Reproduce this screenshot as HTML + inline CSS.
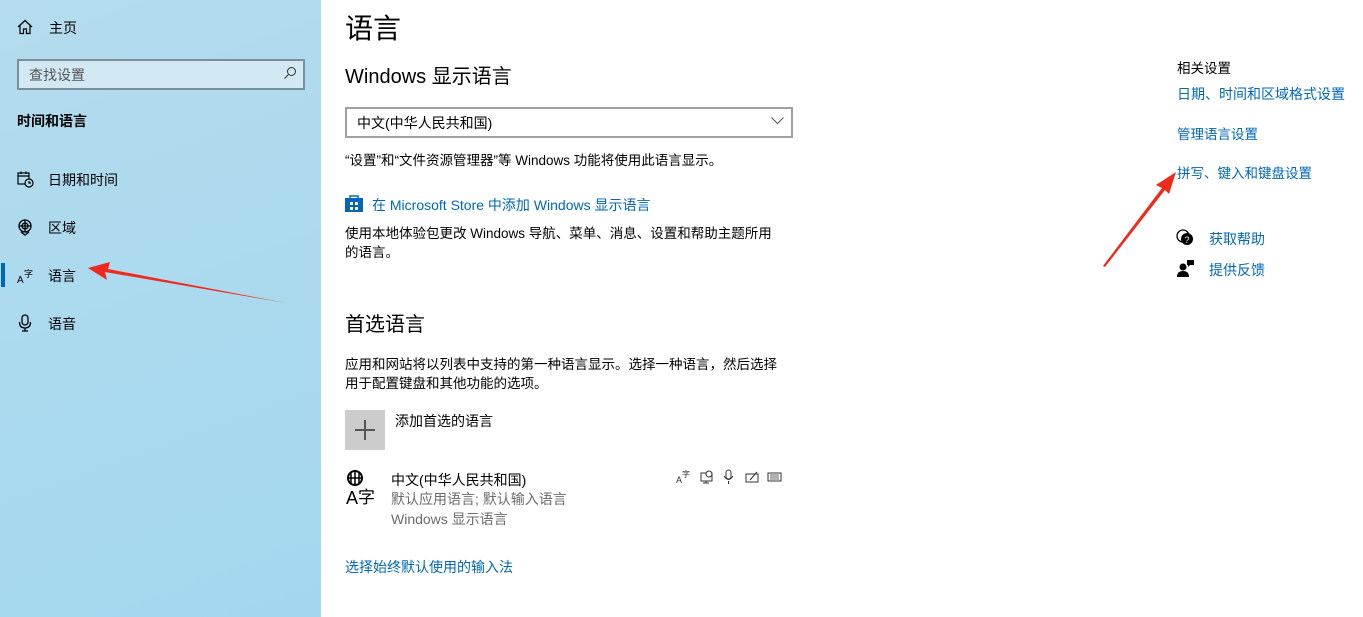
<!DOCTYPE html>
<html><head><meta charset="utf-8"><style>
*{margin:0;padding:0;box-sizing:border-box}
body{width:1363px;height:617px;overflow:hidden;background:#fff;font-family:"Liberation Sans","Noto Sans CJK SC",sans-serif;font-size:14px;color:#000;position:relative}
.a{position:absolute;white-space:nowrap}
.side{position:absolute;left:0;top:0;width:321px;height:617px;background:linear-gradient(160deg,#b4dcee,#a9d9ee 60%,#a4d7ee)}
.link{color:#0067b8}
.gray{color:#6b6b6b}
</style></head><body>
<div class="side"></div>
<svg class="a" style="left:17px;top:19px" width="16" height="16" viewBox="0 0 16 16" fill="none" stroke="#000" stroke-width="1.2"><path d="M1 8 L8 1.5 L15 8 M3 6.5 V14.5 H6.5 V10 H9.5 V14.5 H13 V6.5"/></svg>
<div class="a" style="left:49px;top:18px">主页</div>
<div class="a" style="left:17px;top:59px;width:288px;height:31px;border:2px solid #7a8f99;background:#d2e8f3"></div>
<div class="a" style="left:29px;top:65px;color:#555">查找设置</div>
<svg class="a" style="left:283px;top:66px" width="14" height="14" viewBox="0 0 14 14" fill="none" stroke="#333" stroke-width="1"><circle cx="8.5" cy="5.5" r="4"/><path d="M5.5 8.5 L1.5 12.5"/></svg>
<div class="a" style="left:17px;top:111px;font-weight:bold">时间和语言</div>
<svg class="a" style="left:17px;top:171px" width="17" height="17" viewBox="0 0 17 17" fill="none" stroke="#000" stroke-width="1.2"><rect x="1" y="2" width="11" height="11"/><path d="M1 5 H12 M4 0.5V3 M9 0.5V3"/><circle cx="12" cy="12" r="4" fill="#b0daee"/><path d="M12 10 V12 H14"/></svg>
<div class="a" style="left:48px;top:170px">日期和时间</div>
<svg class="a" style="left:17px;top:219px" width="17" height="17" viewBox="0 0 17 17" fill="none" stroke="#000" stroke-width="1.3"><circle cx="8" cy="7" r="6"/><circle cx="8" cy="7" r="3"/><path d="M2 7 H14 M8 1 V13"/><path d="M4 13 L8 16 L12 13"/></svg>
<div class="a" style="left:48px;top:218px">区域</div>
<div class="a" style="left:1px;top:263px;width:4px;height:24px;background:#0067b8"></div>
<svg class="a" style="left:17px;top:268px" width="18" height="16" viewBox="0 0 18 16"><text x="0" y="15" font-size="10" font-family="Liberation Sans">A</text><text x="7" y="9" font-size="9" font-family="Noto Sans CJK SC">字</text></svg>
<div class="a" style="left:48px;top:266px">语言</div>
<svg class="a" style="left:18px;top:314px" width="14" height="18" viewBox="0 0 14 18" fill="none" stroke="#000" stroke-width="1.3"><rect x="4" y="1" width="6" height="10" rx="3"/><path d="M1.5 8 Q1.5 14 7 14 Q12.5 14 12.5 8 M7 14 V17 M4 17 H10"/></svg>
<div class="a" style="left:48px;top:314px">语音</div>
<div class="a" style="left:345px;top:7px;font-size:28px">语言</div>
<div class="a" style="left:345px;top:60px;font-size:20px">Windows 显示语言</div>
<div class="a" style="left:345px;top:107px;width:448px;height:31px;border:2px solid #a0a0a0"></div>
<div class="a" style="left:357px;top:113px">中文(中华人民共和国)</div>
<svg class="a" style="left:771px;top:117px" width="13" height="8" viewBox="0 0 13 8" fill="none" stroke="#555" stroke-width="1"><path d="M0.5 0.5 L6.5 6.5 L12.5 0.5"/></svg>
<div class="a" style="left:345px;top:149px;font-size:13.5px">“设置”和“文件资源管理器”等 Windows 功能将使用此语言显示。</div>
<svg class="a" style="left:345px;top:194px" width="18" height="18" viewBox="0 0 18 18"><path d="M5 4 V2 H13 V4" fill="none" stroke="#0067b8" stroke-width="1.5"/><rect x="0" y="4" width="18" height="14" fill="#0067b8"/><rect x="5" y="8" width="3" height="3" fill="#fff"/><rect x="10" y="8" width="3" height="3" fill="#fff"/><rect x="5" y="13" width="3" height="3" fill="#fff"/><rect x="10" y="13" width="3" height="3" fill="#fff"/></svg>
<div class="a link" style="left:372px;top:195px">在 Microsoft Store 中添加 Windows 显示语言</div>
<div class="a" style="left:345px;top:224px;font-size:13.5px;line-height:19px">使用本地体验包更改 Windows 导航、菜单、消息、设置和帮助主题所用<br>的语言。</div>
<div class="a" style="left:345px;top:308px;font-size:20px">首选语言</div>
<div class="a" style="left:345px;top:355px;font-size:13.5px;line-height:19px">应用和网站将以列表中支持的第一种语言显示。选择一种语言，然后选择<br>用于配置键盘和其他功能的选项。</div>
<div class="a" style="left:345px;top:410px;width:40px;height:40px;background:#ccc"></div>
<div class="a" style="left:355px;top:429px;width:20px;height:1.5px;background:#555"></div>
<div class="a" style="left:364px;top:420px;width:1.5px;height:20px;background:#555"></div>
<div class="a" style="left:395px;top:411px">添加首选的语言</div>
<svg class="a" style="left:345px;top:470px" width="36" height="36" viewBox="0 0 36 36"><circle cx="10" cy="8" r="7" fill="none" stroke="#000" stroke-width="2"/><path d="M3 8 H17 M10 1 V15 M6 3 V13 M14 3 V13" stroke="#000" stroke-width="1.5"/><text x="1" y="34" font-size="18" font-family="Liberation Sans">A</text><text x="13" y="33" font-size="17" font-family="Noto Sans CJK SC">字</text></svg>
<div class="a" style="left:391px;top:470px">中文(中华人民共和国)</div>
<div class="a gray" style="left:391px;top:489px">默认应用语言; 默认输入语言</div>
<div class="a gray" style="left:391px;top:509px">Windows 显示语言</div>
<svg class="a" style="left:676px;top:469px" width="108" height="16" viewBox="0 0 108 16" fill="none" stroke="#333" stroke-width="1"><text x="0" y="14" font-size="9" font-family="Liberation Sans" fill="#333" stroke="none">A</text><text x="6" y="8" font-size="8" font-family="Noto Sans CJK SC" fill="#333" stroke="none">字</text><rect x="25" y="4" width="11" height="8"/><circle cx="33" cy="5" r="3" fill="#fff"/><path d="M30 12 V14 M27 14 H33"/><rect x="50" y="1" width="5" height="9" rx="2.5"/><path d="M48 7 Q52.5 14 57 7 M52.5 12 V15"/><rect x="70" y="5" width="12" height="8"/><path d="M74 11 L81 3"/><rect x="92" y="4" width="13" height="8"/><path d="M94 6H103M94 8H103M94 10H103" stroke-width="0.7"/></svg>
<div class="a link" style="left:345px;top:557px">选择始终默认使用的输入法</div>
<div class="a" style="left:1177px;top:57px;font-size:13.5px">相关设置</div>
<div class="a link" style="left:1177px;top:84px">日期、时间和区域格式设置</div>
<div class="a link" style="left:1177px;top:123px;font-size:13.5px">管理语言设置</div>
<div class="a link" style="left:1177px;top:162px;font-size:13.5px">拼写、键入和键盘设置</div>
<svg class="a" style="left:1176px;top:229px" width="18" height="17" viewBox="0 0 18 17"><circle cx="7" cy="7" r="6" fill="none" stroke="#000" stroke-width="1.3"/><circle cx="11" cy="10" r="6" fill="#000"/><text x="8.5" y="14" fill="#fff" font-size="9" font-family="Liberation Sans">?</text></svg>
<div class="a link" style="left:1209px;top:229px">获取帮助</div>
<svg class="a" style="left:1177px;top:259px" width="18" height="18" viewBox="0 0 18 18"><circle cx="6" cy="8" r="3.5"/><path d="M0 18 Q0 12 6 12 Q12 12 12 18Z"/><path d="M10 1 H17 V6 H13 L11 8 V6 H10Z"/></svg>
<div class="a link" style="left:1209px;top:260px">提供反馈</div>
<svg class="a" style="left:0;top:0" width="1363" height="617" viewBox="0 0 1363 617"><path d="M286 303 L105 272 L107 280 L88 268 L110 262 L108 269 Z" fill="#ee2a1e"/><path d="M1103 266 L1162 188 L1156 185 L1176 172 L1169 194 L1165 190 L1105 267Z" fill="#ee2a1e"/></svg>
</body></html>
